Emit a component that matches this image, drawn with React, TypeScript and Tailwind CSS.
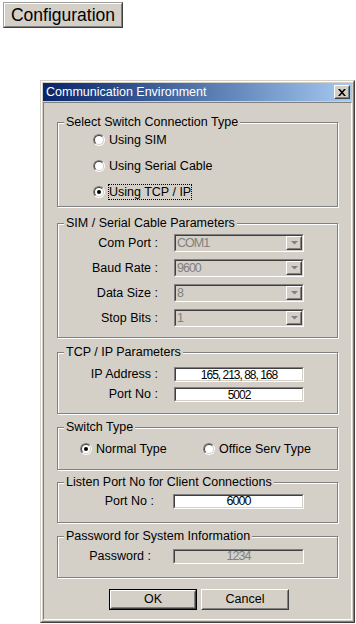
import type { ReactNode } from "react";

const face = "bg-[#d4d0c8]";

function Raised({ className = "", children }: { className?: string; children?: ReactNode }) {
  return (
    <div className={`border border-t-white border-l-white border-b-[#404040] border-r-[#404040] ${className}`}>
      <div className={`flex size-full items-center justify-center border border-t-[#d4d0c8] border-l-[#d4d0c8] border-b-[#808080] border-r-[#808080] ${face}`}>
        {children}
      </div>
    </div>
  );
}

function Sunken({ className = "", inner = "", children }: { className?: string; inner?: string; children?: ReactNode }) {
  return (
    <div className={`border border-t-[#808080] border-l-[#808080] border-b-white border-r-white ${className}`}>
      <div className={`flex size-full items-center border border-t-[#404040] border-l-[#404040] border-b-[#d4d0c8] border-r-[#d4d0c8] ${inner}`}>
        {children}
      </div>
    </div>
  );
}

function Radio({ checked = false }: { checked?: boolean }) {
  return (
    <span className="block size-[12px] shrink-0 rounded-full border border-t-[#808080] border-l-[#808080] border-b-white border-r-white">
      <span className="flex size-full items-center justify-center rounded-full border border-t-[#404040] border-l-[#404040] border-b-[#d4d0c8] border-r-[#d4d0c8] bg-white">
        {checked && <span className="block size-[4px] rounded-full bg-black" />}
      </span>
    </span>
  );
}

function RadioItem({ label, checked, focused, className = "" }: { label: string; checked?: boolean; focused?: boolean; className?: string }) {
  return (
    <div className={`flex h-[16px] items-center ${className}`}>
      <Radio checked={checked} />
      <span
        className={`ml-[3px] border px-[0px] leading-[14px] ${focused ? "border-dotted border-black" : "border-transparent"}`}
      >
        {label}
      </span>
    </div>
  );
}

function Group({ title, className = "", children }: { title: string; className?: string; children?: ReactNode }) {
  return (
    <fieldset className={`mx-[13px] border border-[#808080] shadow-[inset_1px_1px_0_#fff,1px_1px_0_#fff] ${className}`}>
      <legend className={`ml-[6px] px-[2px] leading-[14px] ${face}`}>{title}</legend>
      {children}
    </fieldset>
  );
}

function Combo({ value }: { value: string }) {
  return (
    <Sunken className="ml-[16px] h-[18px] w-[130px]" inner={face}>
      <span className="flex-1 pl-[1px] leading-none tracking-[-1px] text-[#808080]">{value}</span>
      <Raised className="h-full w-[16px]">
        <svg width="7" height="4" viewBox="0 0 7 4">
          <path d="M0 0h7L3.5 3.5z" fill="#808080" />
        </svg>
      </Raised>
    </Sunken>
  );
}

const serialRows = [
  { label: "Com Port :", value: "COM1" },
  { label: "Baud Rate :", value: "9600" },
  { label: "Data Size :", value: "8" },
  { label: "Stop Bits :", value: "1" }
];

export default function App() {
  return (
    <div className="h-[624px] w-[356px] overflow-hidden bg-white font-['Liberation_Sans',Arial,sans-serif] text-[12.5px] text-black">
      <div className="ml-[3px] pt-[2px]">
        <div className="h-[26px] w-[120px] border border-t-[#a0a0a0] border-l-[#a0a0a0] border-b-[#404040] border-r-[#404040]">
          <div className={`flex size-full items-center justify-center border border-t-white border-l-white border-b-[#808080] border-r-[#808080] text-[17.5px] ${face}`}>
            Configuration
          </div>
        </div>
      </div>

      <div className="ml-[40px] mt-[52px] h-[543px] w-[315px] border border-t-[#d4d0c8] border-l-[#d4d0c8] border-b-[#404040] border-r-[#404040]">
        <div className={`flex size-full flex-col border border-t-white border-l-white border-b-[#808080] border-r-[#808080] p-[1px] ${face}`}>
          <div className="flex h-[18px] items-center justify-between bg-linear-to-r from-[#0a246a] to-[#a6caf0] pl-[3px] pr-[2px]">
            <span className="text-white">Communication Environment</span>
            <Raised className="h-[14px] w-[16px]">
              <svg width="8" height="7" viewBox="0 0 8 7">
                <path d="M0 0h2l2 2.2L6 0h2L5 3.5 8 7H6L4 4.8 2 7H0l3-3.5z" fill="#000" />
              </svg>
            </Raised>
          </div>

          <div className="mt-[1px] flex flex-1 flex-col border border-t-[#808080] border-l-[#808080] border-b-white border-r-white pt-[12px]">
            <Group title="Select Switch Connection Type" className="h-[92px]">
              <div className="flex flex-col gap-[10px] pl-[35px] pt-[3px]">
                <RadioItem label="Using SIM" />
                <RadioItem label="Using Serial Cable" />
                <RadioItem label="Using TCP / IP" checked focused />
              </div>
            </Group>

            <Group title="SIM / Serial Cable Parameters" className="mt-[9px] h-[122px]">
              <div className="flex flex-col gap-[7px] pt-[4px]">
                {serialRows.map((row) => (
                  <div key={row.label} className="flex h-[18px] items-center">
                    <span className="w-[100px] text-right">{row.label}</span>
                    <Combo value={row.value} />
                  </div>
                ))}
              </div>
            </Group>

            <Group title="TCP / IP Parameters" className="mt-[7px] h-[69px]">
              <div className="flex flex-col gap-[5px] pt-[8px]">
                <div className="flex h-[15px] items-center">
                  <span className="w-[100px] text-right">IP Address :</span>
                  <Sunken className="ml-[16px] h-[15px] w-[130px]" inner="justify-center bg-white text-[12px] leading-none tracking-[-1px]">
                    165, 213, 88, 168
                  </Sunken>
                </div>
                <div className="flex h-[15px] items-center">
                  <span className="w-[100px] text-right">Port No :</span>
                  <Sunken className="ml-[16px] h-[15px] w-[130px]" inner="justify-center bg-white text-[12px] leading-none tracking-[-1px]">
                    5002
                  </Sunken>
                </div>
              </div>
            </Group>

            <Group title="Switch Type" className="mt-[6px] h-[50px]">
              <div className="flex pl-[22px] pt-[7px]">
                <RadioItem label="Normal Type" checked className="w-[123px]" />
                <RadioItem label="Office Serv Type" />
              </div>
            </Group>

            <Group title="Listen Port No for Client Connections" className="mt-[5px] h-[48px]">
              <div className="flex h-[15px] items-center" style={{ marginTop: 5 }}>
                <span className="w-[96px] text-right">Port No :</span>
                <Sunken className="ml-[19px] h-[15px] w-[131px]" inner="justify-center bg-white leading-none tracking-[-1px]">
                  6000
                </Sunken>
              </div>
            </Group>

            <Group title="Password for System Information" className="mt-[6px] h-[49px]">
              <div className="mt-[6px] flex h-[15px] items-center">
                <span className="w-[93px] text-right">Password :</span>
                <Sunken className="ml-[22px] h-[15px] w-[131px]" inner={`justify-center leading-none tracking-[-1px] text-[#808080] ${face}`}>
                  1234
                </Sunken>
              </div>
            </Group>

            <div className="ml-[65px] mt-[11px] flex gap-[4px]">
              <div className="h-[21px] w-[88px] border border-black">
                <Raised className="size-full">OK</Raised>
              </div>
              <Raised className="h-[21px] w-[88px]">Cancel</Raised>
            </div>
          </div>
        </div>
      </div>
    </div>
  );
}
